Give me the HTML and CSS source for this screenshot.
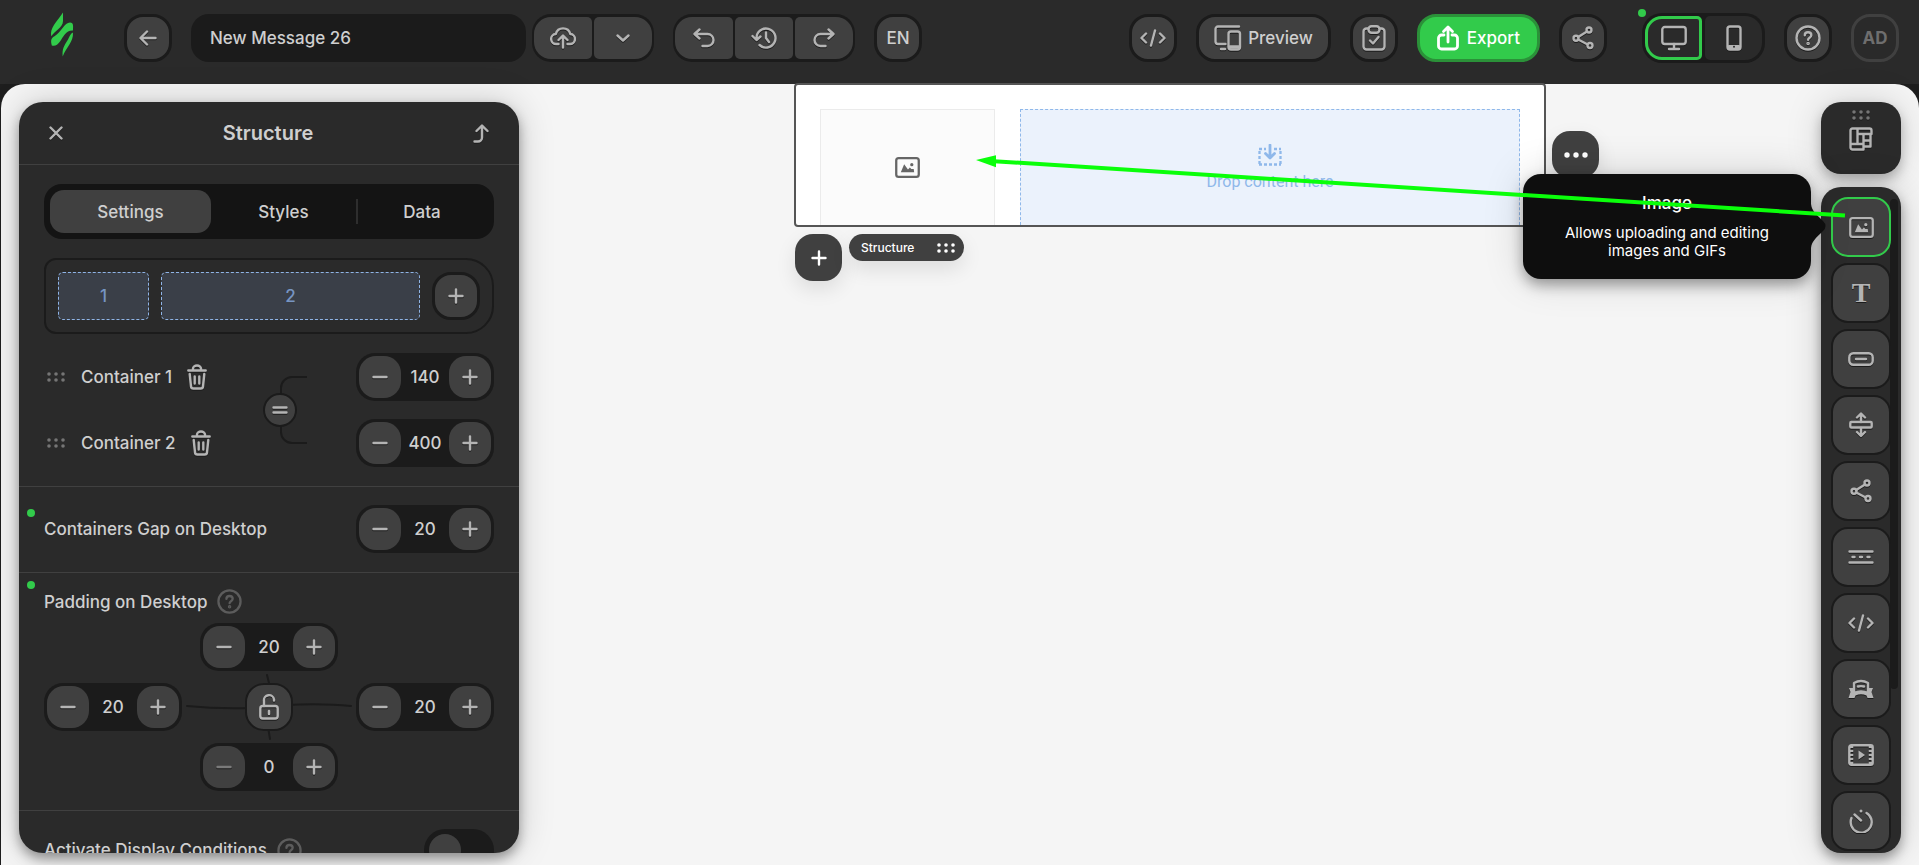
FILE: index.html
```html
<!DOCTYPE html>
<html lang="en">
  <head>
    <meta charset="utf-8">
    <title>New Message 26</title>
    <link rel="stylesheet" href="styles.css">
  </head>
  <body>
    <svg class="sprite" aria-hidden="true">
      <symbol id="plus" viewBox="0 0 16 16"><path d="M8 1.500v13M1.500 8h13"/></symbol>
      <symbol id="minus" viewBox="0 0 16 16"><path d="M1.500 8h13"/></symbol>
      <symbol id="grip" viewBox="0 0 18 10">
        <g fill="currentColor" stroke="none">
          <circle cx="2" cy="2" r="1.800"/><circle cx="9" cy="2" r="1.800"/><circle cx="16" cy="2" r="1.800"/>
          <circle cx="2" cy="8" r="1.800"/><circle cx="9" cy="8" r="1.800"/><circle cx="16" cy="8" r="1.800"/>
        </g>
      </symbol>
      <symbol id="help" viewBox="0 0 26 26">
        <circle cx="13" cy="13" r="11.500"/>
        <path d="M9.800 10.300c0-1.900 1.400-3 3.200-3s3.300 1.100 3.300 2.900c0 2.500-3.200 2.400-3.200 4.500"/>
        <circle cx="13.100" cy="18.500" r="0.600" fill="currentColor"/>
      </symbol>
      <symbol id="trash" viewBox="0 0 20 26">
        <path d="M1.300 6.500h17.400M6 6V4.500a4 3 0 0 1 8 0V6M2.700 10l1.300 12.300a2.400 2.400 0 0 0 2.400 2.200h7.200a2.400 2.400 0 0 0 2.400-2.200L17.300 10M7.700 12.500v7M12.300 12.500v7"/>
      </symbol>
      <symbol id="code" viewBox="0 0 26 18"><path d="M6 4.500L1.500 9 6 13.500M20 4.500L24.500 9 20 13.500M15 1.500l-4 15"/></symbol>
      <symbol id="share" viewBox="0 0 22 24">
        <path d="M6.200 11L15 5.500M6.200 13.500l9 4.700"/>
        <circle cx="4" cy="12.300" r="2.500"/><circle cx="17" cy="4" r="2.500"/><circle cx="18" cy="19.500" r="2.500"/>
      </symbol>
      <symbol id="picture" viewBox="0 0 26 22">
        <rect x="1.200" y="1.200" width="23.600" height="19.600" rx="2.500"/>
        <path d="M6 16l3.500-8.500 4 5.500 2-2 1.500 1.500h2.500L20 16z" fill="currentColor" stroke="none"/>
        <circle cx="17.500" cy="8" r="1.700" fill="currentColor" stroke="none"/>
      </symbol>
    </svg>

    <header class="topbar">
      <a class="logo" href="#" aria-label="Home">
        <svg width="24" height="53" viewBox="0 0 24 53">
          <path d="M13 .5C8 8 1.500 14 1 21c0 1.300.1 2.300.4 3.300C4 19 13 16 13 9z"/>
          <path d="M1.800 33.500C.8 29 .5 26.500 4.500 24.300 11 20.500 14.500 10.500 20 10.500c4 0 3 4.500 3 8-7-.5-9.500 6-13 11-2.500 3.500-5 5-8.200 4z"/>
          <path d="M23 20.500c.5 10-6.500 14-10.300 24-.7-8 1.300-10.500 5.300-17 1.500-3 2.500-6 5-7z"/>
        </svg>
      </a>
      <button class="btn" aria-label="Back">
        <svg width="18" height="16" viewBox="0 0 18 16"><path d="M16.500 8H2M8 1.500L1.500 8 8 14.500"/></svg>
      </button>
      <div class="name-row">
        <input class="name" type="text" value="New Message 26" aria-label="Message name">
        <div class="group">
          <button class="btn first" aria-label="Save">
            <svg width="26" height="22" viewBox="0 0 26 22"><path d="M8.500 17H6.500a5 5 0 0 1-.7-10 7.500 7.500 0 0 1 14.500 0 5 5 0 0 1-.7 10H17.500M13 20.500V9.500M8.500 13L13 8.500l4.500 4.500"/></svg>
          </button>
          <button class="btn last" aria-label="Save options">
            <svg width="14" height="8" viewBox="0 0 14 8"><path d="M1.500 1.500L7 6.500l5.500-5"/></svg>
          </button>
        </div>
      </div>
      <div class="group">
        <button class="btn first" aria-label="Undo">
          <svg width="22" height="20" viewBox="0 0 22 20"><path d="M6.500 1.500L1.500 6l5 4.500M2 6h12.500a6 6 0 0 1 0 12H9.500"/></svg>
        </button>
        <button class="btn" aria-label="History">
          <svg width="26" height="22" viewBox="0 0 26 22"><path d="M5.500 12V11a9.500 9.500 0 1 1 3 7M1.500 9l4 4 4-3.500M15 5.500V11l3 4"/></svg>
        </button>
        <button class="btn last" aria-label="Redo">
          <svg width="22" height="20" viewBox="0 0 22 20"><path d="M15.500 1.500l5 4.500-5 4.500M20 6H7.500a6 6 0 0 0 0 12h5"/></svg>
        </button>
      </div>
      <button class="btn">EN</button>

      <div class="actions">
        <button class="btn" aria-label="Code editor"><svg width="26" height="18"><use href="#code"/></svg></button>
        <button class="btn wide">
          <svg width="28" height="26" viewBox="0 0 28 26"><path d="M25 1.500H4A2.500 2.500 0 0 0 1.500 4v12.500A2.500 2.500 0 0 0 4 19h7.500M7 24h4"/><rect x="14.500" y="6.500" width="11.500" height="18" rx="2.500"/><path d="M15.500 22h9.500" stroke-width="3.500"/></svg>
          Preview
        </button>
        <button class="btn" aria-label="Checklist">
          <svg width="24" height="26" viewBox="0 0 24 26"><path d="M6.500 3.500H4.500a3 3 0 0 0-3 3v15a3 3 0 0 0 3 3h15a3 3 0 0 0 3-3v-15a3 3 0 0 0-3-3h-2M8 15.500l3 3 5.500-6.500"/><rect x="6.500" y="1.300" width="11" height="6.500" rx="3"/></svg>
        </button>
        <button class="btn wide export">
          <svg width="22" height="26" viewBox="0 0 22 26"><path d="M7 10H4.500a3 3 0 0 0-3 3v8a3 3 0 0 0 3 3h13a3 3 0 0 0 3-3v-8a3 3 0 0 0-3-3H15M11 17V2.500M6.500 6.500L11 2l4.500 4.500"/></svg>
          Export
        </button>
        <button class="btn" aria-label="Share"><svg width="22" height="24"><use href="#share"/></svg></button>
        <div class="devices">
          <button class="device active" aria-label="Desktop">
            <svg width="26" height="26" viewBox="0 0 26 26"><rect x="1.300" y="2" width="23.400" height="17" rx="2.500"/><path d="M13 19v5M8 24h10"/></svg>
          </button>
          <button class="device" aria-label="Mobile">
            <svg width="16" height="26" viewBox="0 0 16 26"><rect x="1.500" y="1.500" width="13" height="23" rx="2.500"/><path d="M3 22h10" stroke-width="4"/><circle cx="8" cy="21.800" r="1" fill="#2a2a2a" stroke="none"/></svg>
          </button>
        </div>
        <button class="btn" aria-label="Help"><svg width="26" height="26"><use href="#help"/></svg></button>
        <button class="btn avatar">AD</button>
      </div>
    </header>

    <main class="workspace">
      <section class="panel">
        <div class="panel-head">
          <button class="plain" aria-label="Close"><svg width="14" height="14" viewBox="0 0 14 14"><path d="M1.500 1.500l11 11M12.500 1.500l-11 11"/></svg></button>
          <h1>Structure</h1>
          <button class="plain" aria-label="Up one level"><svg width="16" height="19" viewBox="0 0 16 19"><path d="M1.500 17.500H5a4 4 0 0 0 4-4V2M3.500 7L9 1.500 14.500 7"/></svg></button>
        </div>

        <div class="section">
          <div class="tabs">
            <button class="tab active">Settings</button>
            <button class="tab">Styles</button>
            <button class="tab divided">Data</button>
          </div>
          <div class="layout">
            <div class="cell one">1</div>
            <div class="cell two">2</div>
            <button class="btn" aria-label="Add container"><svg width="16" height="16"><use href="#plus"/></svg></button>
          </div>
          <div class="containers">
            <div class="names">
              <div class="item"><svg class="grip" width="18" height="10"><use href="#grip"/></svg>Container 1<button class="plain" aria-label="Delete container 1"><svg width="20" height="26"><use href="#trash"/></svg></button></div>
              <div class="item"><svg class="grip" width="18" height="10"><use href="#grip"/></svg>Container 2<button class="plain" aria-label="Delete container 2"><svg width="20" height="26"><use href="#trash"/></svg></button></div>
            </div>
            <div class="link">
              <svg class="wire" width="44" height="70" viewBox="0 0 44 70"><path d="M44 2H29a11 11 0 0 0-11 11v44a11 11 0 0 0 11 11h15"/></svg>
              <button class="equal" aria-label="Make equal"><svg width="16" height="10" viewBox="0 0 16 10"><path d="M1.500 2.500h13M1.500 7.500h13"/></svg></button>
            </div>
            <div class="widths">
              <div class="stepper">
                <button aria-label="Decrease"><svg width="16" height="16"><use href="#minus"/></svg></button>
                <input type="text" value="140" aria-label="Container 1 width">
                <button aria-label="Increase"><svg width="16" height="16"><use href="#plus"/></svg></button>
              </div>
              <div class="stepper">
                <button aria-label="Decrease"><svg width="16" height="16"><use href="#minus"/></svg></button>
                <input type="text" value="400" aria-label="Container 2 width">
                <button aria-label="Increase"><svg width="16" height="16"><use href="#plus"/></svg></button>
              </div>
            </div>
          </div>
        </div>

        <div class="section row">
          <label class="label changed" for="gap">Containers Gap on Desktop</label>
          <div class="stepper">
            <button aria-label="Decrease"><svg width="16" height="16"><use href="#minus"/></svg></button>
            <input id="gap" type="text" value="20">
            <button aria-label="Increase"><svg width="16" height="16"><use href="#plus"/></svg></button>
          </div>
        </div>

        <div class="section padding">
          <div class="label changed">Padding on Desktop <svg class="hint" width="25" height="25"><use href="#help"/></svg></div>
          <div class="sides">
            <div class="stepper top">
              <button aria-label="Decrease"><svg width="16" height="16"><use href="#minus"/></svg></button>
              <input type="text" value="20" aria-label="Padding top">
              <button aria-label="Increase"><svg width="16" height="16"><use href="#plus"/></svg></button>
            </div>
            <div class="stepper left">
              <button aria-label="Decrease"><svg width="16" height="16"><use href="#minus"/></svg></button>
              <input type="text" value="20" aria-label="Padding left">
              <button aria-label="Increase"><svg width="16" height="16"><use href="#plus"/></svg></button>
            </div>
            <svg class="wire" width="174" height="66" viewBox="0 0 174 66"><path d="M5 32c20 2 40 3 65 2M104 31c20-1 45-1 65 1M85 1l3 12M86 53l2 12"/></svg>
            <button class="btn lock" aria-label="Link paddings">
              <svg width="20" height="26" viewBox="0 0 20 26"><rect x="1.300" y="12" width="17.400" height="12.500" rx="2.500"/><path d="M5 12V7a5 5 0 0 1 10-1.500v1"/><path d="M10 17v3" stroke-width="2.500"/></svg>
            </button>
            <div class="stepper right">
              <button aria-label="Decrease"><svg width="16" height="16"><use href="#minus"/></svg></button>
              <input type="text" value="20" aria-label="Padding right">
              <button aria-label="Increase"><svg width="16" height="16"><use href="#plus"/></svg></button>
            </div>
            <div class="stepper bottom">
              <button class="off" aria-label="Decrease"><svg width="16" height="16"><use href="#minus"/></svg></button>
              <input type="text" value="0" aria-label="Padding bottom">
              <button aria-label="Increase"><svg width="16" height="16"><use href="#plus"/></svg></button>
            </div>
          </div>
        </div>

        <div class="section row conditions">
          <label class="label" for="conditions">Activate Display Conditions <svg class="hint" width="25" height="25"><use href="#help"/></svg></label>
          <input id="conditions" class="switch" type="checkbox">
        </div>
      </section>

      <section class="stage">
        <div class="structure">
          <div class="drop small"><svg width="25" height="21"><use href="#picture"/></svg></div>
          <div class="drop big">
            <svg width="24" height="22" viewBox="0 0 24 22"><path d="M1 5h7M16 5h7M1 20.500h22M1.500 7v13M22.500 7v13" stroke-dasharray="3 2" stroke-width="2.300" stroke-linecap="butt"/><path d="M12 1v12M7.500 9.500l4.500 4.500 4.500-4.500" stroke-width="2.800"/></svg>
            <span>Drop content here</span>
          </div>
          <button class="float more" aria-label="More"><svg width="24" height="6" viewBox="0 0 24 6"><g fill="#fff" stroke="none"><circle cx="3" cy="3" r="2.700"/><circle cx="12" cy="3" r="2.700"/><circle cx="21" cy="3" r="2.700"/></g></svg></button>
          <svg class="pointer" width="870" height="64" viewBox="0 0 870 64"><path d="M18 6.200L869 60.500" stroke-width="4"/><path d="M0 5L20 .3v12z"/></svg>
        </div>
        <div class="under">
          <button class="float" aria-label="Add structure"><svg width="16" height="16"><use href="#plus"/></svg></button>
          <div class="tag">Structure <svg width="18" height="10"><use href="#grip"/></svg></div>
        </div>
      </section>

      <aside class="tools">
        <button class="modules" aria-label="Modules">
          <svg class="grip" width="18" height="10"><use href="#grip"/></svg>
          <svg width="24" height="24" viewBox="0 0 24 24"><path d="M3.500 1.500h17a2 2 0 0 1 2 2V7H8.500M14 22.500H3.500a2 2 0 0 1-2-2v-17a2 2 0 0 1 2-2h5V17M1.500 17H14M14.500 7v15.500M21.500 7v12.500h-7M14.500 13.500h7"/></svg>
        </button>
        <div class="blocks">
          <button class="block active" aria-label="Image"><svg width="25" height="21"><use href="#picture"/></svg></button>
          <button class="block letter">T</button>
          <button class="block" aria-label="Button"><svg width="26" height="14" viewBox="0 0 26 14"><rect x="1.300" y="1.300" width="23.400" height="11.400" rx="4"/><path d="M8 7h10"/></svg></button>
          <button class="block" aria-label="Spacer"><svg width="24" height="26" viewBox="0 0 24 26"><rect x="1.300" y="10" width="21.400" height="5.500" rx="1"/><path d="M12 10V3M8 5.500l4-4 4 4M12 16v7M8 20l4 4 4-4"/></svg></button>
          <button class="block" aria-label="Social"><svg width="22" height="24"><use href="#share"/></svg></button>
          <button class="block" aria-label="Menu"><svg width="26" height="14" viewBox="0 0 26 14"><path d="M1.500 1.500h23M1.500 12.500h23M4.500 7h2M12 7h2M19.500 7h2"/></svg></button>
          <button class="block" aria-label="HTML"><svg width="26" height="18"><use href="#code"/></svg></button>
          <button class="block" aria-label="Banner"><svg width="26" height="20" viewBox="0 0 26 20"><path d="M6 14V4q7-4 14 0v10q-7-3-14 0zM10 7.500q3-.7 6 0"/><path d="M5 9H1l1.500 4L.5 19h6l1-2.500q5.500-2.500 11 0l1 2.500h6l-2-6L25 9h-4v5q-8-3-16 0z" fill="currentColor" stroke="none"/></svg></button>
          <button class="block" aria-label="Video"><svg width="26" height="22" viewBox="0 0 26 22"><rect x="1.300" y="1.300" width="23.400" height="19.400" rx="2"/><path d="M3.500 2v18M22.500 2v18" stroke-dasharray="2 2" stroke-width="3.500" stroke-linecap="butt"/><path d="M10.500 6.500v9l6.500-4.500z" fill="currentColor" stroke="none"/></svg></button>
          <button class="block" aria-label="Timer"><svg width="24" height="24" viewBox="0 0 24 24"><path d="M2.500 9a10.500 10.500 0 1 0 15-5M5.500 5.500l6.500 6"/><circle cx="12" cy="2" r="1.500" fill="currentColor" stroke="none"/></svg></button>
        </div>
        <div class="tooltip" role="tooltip">
          <strong>Image</strong>
          <p>Allows uploading and editing images and GIFs</p>
          <svg class="beak" width="16" height="44" viewBox="0 0 16 44"><path d="M0 0C1 7 4 9 12 17q5 5 0 10C4 35 1 37 0 44z"/></svg>
        </div>
      </aside>
    </main>
  </body>
</html>
```
FILE: styles.css
```css
* {
  box-sizing: border-box;
}
body {
  margin: 0;
  height: 100vh;
  display: flex;
  flex-direction: column;
  overflow: hidden;
  background: #1e1e1e;
  color: #cfcfcf;
  font-family: Inter, "Liberation Sans", sans-serif;
  font-size: 17px;
  font-weight: 500;
}
button,
input {
  font: inherit;
  color: inherit;
  margin: 0;
}
button {
  display: flex;
  align-items: center;
  justify-content: center;
  padding: 0;
  border: 0;
  cursor: pointer;
}
svg {
  flex: none;
  fill: none;
  stroke: currentColor;
  stroke-width: 2.4;
  stroke-linecap: round;
  stroke-linejoin: round;
}
button svg {
  color: #b4b4b4;
  filter: drop-shadow(0 1px 0 #1c1c1c);
}
.sprite {
  position: absolute;
  width: 0;
  height: 0;
}

/* top bar */
.topbar {
  flex: none;
  display: flex;
  align-items: center;
  gap: 19px;
  height: 84px;
  padding: 0 20px 8px 50px;
  background: #2a2a2a;
}
.logo {
  display: flex;
  margin-right: 31px;
}
.logo svg {
  fill: #32cb4b;
  stroke: none;
}
.btn {
  width: 48px;
  height: 48px;
  flex: none;
  gap: 6px;
  border: 3px solid #1b1b1b;
  border-radius: 19px;
  background: #404040;
}
.btn.wide {
  width: auto;
  padding: 0 15px;
}
.btn.export {
  gap: 8px;
  padding: 0 17px;
  color: #fff;
  background: #32cb4b;
  border-color: #2b9139;
}
.export svg {
  color: #fff;
  stroke-width: 2.8;
  filter: none;
}
.btn.avatar {
  background: #2a2a2a;
  border-color: #404040;
  color: #6e6e6e;
  font-weight: 700;
}
.name-row {
  display: flex;
  flex: 0 1 463px;
  gap: 6px;
}
.name {
  flex: 1;
  min-width: 0;
  height: 48px;
  padding: 0 19px;
  border: 0;
  border-radius: 18px;
  background: #1b1b1b;
}
.group {
  display: flex;
  gap: 2px;
  padding: 3px 2px;
  border-radius: 19px;
  background: #1b1b1b;
}
.group .btn {
  width: 58px;
  height: 42px;
  border: 0;
  border-radius: 5px;
}
.group .btn.first {
  border-radius: 17px 5px 5px 17px;
}
.group .btn.last {
  border-radius: 5px 17px 17px 5px;
}
.actions {
  display: flex;
  align-items: center;
  gap: 19px;
  margin-left: auto;
}
.devices {
  position: relative;
  display: flex;
  gap: 3px;
  margin-left: 16px;
  padding: 3px;
  border-radius: 20px;
  background: #1b1b1b;
}
.devices::before {
  content: "";
  position: absolute;
  left: -4px;
  top: -4px;
  width: 8px;
  height: 8px;
  border-radius: 50%;
  background: #32cb4b;
}
.device {
  width: 57px;
  height: 44px;
  border-radius: 5px 17px 17px 5px;
  background: #2a2a2a;
}
.device.active {
  border: 3px solid #32cb4b;
  border-radius: 17px 5px 5px 17px;
}

/* workspace */
.workspace {
  flex: 1;
  min-height: 0;
  display: flex;
  margin-left: 1px;
  padding: 0 18px;
  border-radius: 24px 24px 0 0;
  background: #f5f5f5;
}
.panel {
  flex: 0 0 500px;
  display: flex;
  flex-direction: column;
  margin: 18px 0 12px;
  overflow: hidden;
  border-radius: 24px;
  background: #2a2a2a;
  box-shadow: 0 6px 12px rgba(0, 0, 0, 0.35), 0 0 36px rgba(0, 0, 0, 0.18);
}
.panel-head {
  flex: none;
  display: flex;
  align-items: center;
  justify-content: space-between;
  height: 63px;
  padding: 0 30px;
  border-bottom: 1px solid #404040;
}
.panel-head h1 {
  margin: 0;
  font-size: 20px;
  font-weight: 600;
}
.plain {
  background: none;
}
.section {
  flex: none;
  padding: 19px 25px;
  border-bottom: 1px solid #404040;
}
.section.row {
  display: flex;
  align-items: center;
  justify-content: space-between;
  padding: 18px 25px 19px;
}
.tabs {
  display: flex;
  height: 55px;
  padding: 6px;
  border-radius: 18px;
  background: #141414;
}
.tab {
  flex: 1 1 auto;
  border-radius: 14px;
  background: none;
}
.tab.active {
  background: #404040;
}
.tab.divided {
  background: linear-gradient(#2e2e2e, #2e2e2e) left center / 2px 25px no-repeat;
  border-radius: 0;
}
.layout {
  display: flex;
  align-items: center;
  gap: 12px;
  height: 76px;
  margin: 19px 0;
  padding: 0 12px;
  border: 2px solid #1b1b1b;
  border-radius: 12px 28px 28px 12px;
}
.cell {
  display: flex;
  align-items: center;
  justify-content: center;
  height: 48px;
  border: 1px dashed #8fb4e6;
  border-radius: 5px;
  background: #3a3f48;
  color: #7795c2;
}
.cell.one {
  flex: 90;
}
.cell.two {
  flex: 259;
}
.containers {
  display: flex;
}
.names {
  flex: 0 0 219px;
}
.names,
.widths {
  display: flex;
  flex-direction: column;
  gap: 18px;
}
.widths {
  margin-left: auto;
}
.item {
  display: flex;
  align-items: center;
  height: 48px;
  padding-left: 3px;
}
.item .plain {
  margin-left: 15px;
}
.grip {
  color: #757575;
}
.item .grip {
  margin-right: 16px;
}
.link {
  display: grid;
  align-items: center;
}
.link > * {
  grid-area: 1 / 1;
}
.wire {
  color: #1b1b1b;
  stroke-width: 2;
}
.equal {
  z-index: 1;
  width: 34px;
  height: 34px;
  border: 2px solid #1b1b1b;
  border-radius: 50%;
  background: #404040;
}
.stepper {
  display: flex;
  width: 138px;
  height: 48px;
  padding: 3px;
  border-radius: 19px;
  background: #1b1b1b;
}
.stepper button {
  flex: none;
  width: 42px;
  border-radius: 17px;
  background: #404040;
}
.stepper button.off svg {
  color: #7a7a7a;
}
.stepper input {
  flex: 1;
  min-width: 0;
  padding: 0;
  border: 0;
  background: none;
  text-align: center;
}
.label {
  position: relative;
  display: flex;
  align-items: center;
  gap: 10px;
  height: 25px;
}
.label.changed::before {
  content: "";
  position: absolute;
  left: -17px;
  top: -8px;
  width: 8px;
  height: 8px;
  border-radius: 50%;
  background: #32cb4b;
}
.hint {
  color: #5c5c5c;
}
.section.padding {
  padding-top: 16px;
}
.sides {
  display: grid;
  grid-template-columns: 138px 1fr 138px;
  row-gap: 12px;
  align-items: center;
  justify-items: center;
  margin-top: 9px;
}
.top,
.bottom {
  grid-column: 2;
}
.top {
  grid-row: 1;
}
.bottom {
  grid-row: 3;
}
.left,
.right,
.lock,
.sides .wire {
  grid-row: 2;
}
.left {
  grid-column: 1;
}
.right {
  grid-column: 3;
}
.lock,
.sides .wire {
  grid-column: 2;
}
.sides .wire {
  margin: -9px 0;
}
.lock {
  border-width: 2px;
  z-index: 1;
}
.section.conditions {
  border-bottom: 0;
}
.switch {
  appearance: none;
  width: 70px;
  height: 42px;
  padding: 5px;
  border-radius: 21px;
  background: #1b1b1b;
}
.switch::before {
  content: "";
  display: block;
  width: 32px;
  height: 32px;
  border-radius: 50%;
  background: #404040;
}

/* canvas */
.stage {
  flex: 1;
  display: flex;
  flex-direction: column;
  align-items: center;
  margin-top: -1px;
}
.structure {
  position: relative;
  display: flex;
  gap: 25px;
  width: 752px;
  height: 144px;
  padding: 24px 24px 0;
  border: 2px solid #555;
  border-radius: 4px;
  background: #fff;
}
.drop {
  display: flex;
  flex-direction: column;
  align-items: center;
  justify-content: center;
  border-bottom: 0;
}
.drop.small {
  flex: 174;
  border: 1px solid #ebebeb;
  border-bottom: 0;
  background: #fbfbfb;
  color: #666;
}
.drop.big {
  flex: 501;
  gap: 6px;
  border: 1px dashed #8fb8ea;
  border-bottom: 0;
  background: #ebf2fc;
  color: #8fb8ea;
  font-family: Roboto, sans-serif;
  font-size: 16px;
  font-weight: 400;
}
.float {
  width: 47px;
  height: 47px;
  border-radius: 18px;
  background: #404040;
  box-shadow: 0 8px 20px rgba(0, 0, 0, 0.1);
}
.float svg {
  color: #fff;
  filter: none;
}
.more {
  position: absolute;
  left: 756px;
  top: 46px;
}
.pointer {
  position: absolute;
  z-index: 5;
  left: 180px;
  top: 70px;
  color: #0aff0a;
  stroke-linecap: butt;
  pointer-events: none;
}
.pointer path:last-child {
  fill: #0aff0a;
  stroke: none;
}
.under {
  display: flex;
  align-items: flex-start;
  gap: 7px;
  width: 750px;
  margin-top: 7px;
}
.tag {
  display: flex;
  align-items: center;
  justify-content: space-between;
  width: 115px;
  height: 27px;
  padding: 0 9px 0 12px;
  border-radius: 14px;
  background: #404040;
  color: #fff;
  font-size: 12px;
  box-shadow: 0 8px 20px rgba(0, 0, 0, 0.1);
}

/* block list */
.tools {
  position: relative;
  flex: 0 0 80px;
  display: flex;
  flex-direction: column;
  gap: 13px;
  margin: 18px 0 12px;
}
.modules {
  flex: none;
  flex-direction: column;
  justify-content: flex-start;
  gap: 7px;
  height: 72px;
  padding-top: 8px;
  border-radius: 20px;
  background: #2a2a2a;
  box-shadow: 0 6px 12px rgba(0, 0, 0, 0.25), 0 0 36px rgba(0, 0, 0, 0.15);
}
.modules .grip {
  color: #757575;
}
.blocks {
  position: relative;
  flex: 1;
  min-height: 0;
  display: flex;
  flex-direction: column;
  gap: 6px;
  padding: 10px 0 0 10px;
  overflow: hidden;
  border-radius: 20px;
  background: #2a2a2a;
  box-shadow: 0 6px 12px rgba(0, 0, 0, 0.35), 0 0 36px rgba(0, 0, 0, 0.18);
}
/* scrollbar thumb */
.blocks::after {
  content: "";
  position: absolute;
  right: 3px;
  top: 12px;
  width: 8px;
  height: 490px;
  border-radius: 4px;
  background: #1b1b1b;
}
.block {
  position: relative;
  z-index: 1;
  flex: none;
  width: 60px;
  height: 60px;
  border: 2px solid #1b1b1b;
  border-radius: 17px;
  background: #404040;
}
.block.active {
  border-color: #32cb4b;
}
.block.letter {
  color: #b4b4b4;
  font: bold 28px "Liberation Serif", serif;
  text-shadow: 0 1px 0 #1c1c1c;
}
.tooltip {
  position: absolute;
  z-index: 2;
  right: 90px;
  top: 72px;
  width: 288px;
  height: 105px;
  padding: 18px 34px;
  border-radius: 18px;
  background: #0e0e0e;
  color: #fff;
  text-align: center;
  font-weight: 400;
  font-size: 15px;
  line-height: 18px;
  box-shadow: 0 6px 14px rgba(0, 0, 0, 0.35), 0 0 40px rgba(0, 0, 0, 0.15);
}
.tooltip strong {
  display: block;
  font-size: 17px;
  font-weight: 500;
  line-height: 22px;
}
.tooltip p {
  margin: 10px 0 0;
}
.beak {
  position: absolute;
  left: 100%;
  top: 30px;
  fill: #0e0e0e;
  stroke: none;
}
```
